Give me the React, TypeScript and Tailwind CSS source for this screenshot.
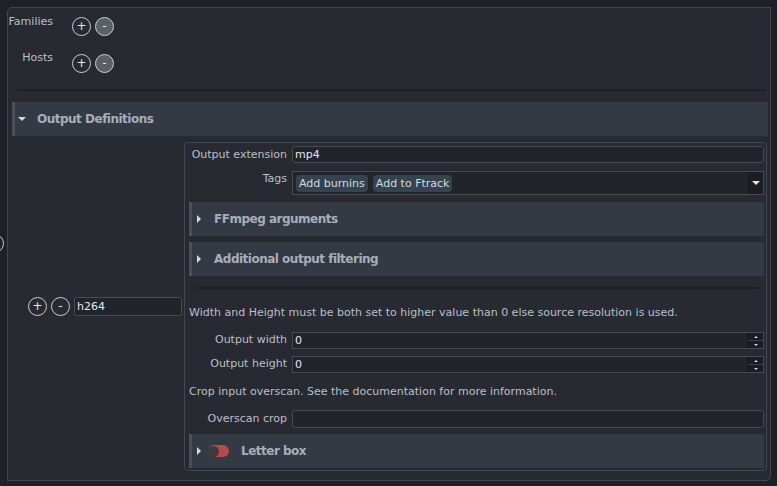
import React from 'react';

const CircleBtn = ({ sign, filled }: { sign: string; filled?: boolean }) => (
  <div
    className={`w-[19px] h-[19px] rounded-full border border-[#c9cdd2] flex items-center justify-center text-[12px] leading-none text-[#e4e7ea] ${
      filled ? 'bg-[#5b5f66]' : 'bg-[#272a31]'
    }`}
  >
    <span className="-mt-[1px]">{sign}</span>
  </div>
);

const Bar = ({ title, children }: { title: string; children?: React.ReactNode }) => (
  <div className="h-[34px] bg-[#343a43] border-l-[3px] border-[#4b4f56] flex items-center">
    <div className="w-0 h-0 ml-[5px] border-y-[4px] border-y-transparent border-l-[4px] border-l-[#d6dadf]" />
    {children}
    <span className={`font-bold text-[#a7afb8] text-[12px] tracking-[-0.5px] ${children ? 'ml-[12px]' : 'ml-[13px]'}`}>
      {title}
    </span>
  </div>
);

const Label = ({ text, className = '' }: { text: string; className?: string }) => (
  <div className={`w-[98px] shrink-0 whitespace-nowrap text-right text-[#b9c0c7] ${className}`}>{text}</div>
);

const Spinner = () => (
  <div className="w-[16px] h-full flex flex-col border-l border-[#15171b]">
    <div className="flex-1 bg-[#1b1d22] flex items-center justify-center border-b border-[#3a3e45]">
      <div className="w-0 h-0 border-x-[2px] border-x-transparent border-b-[2px] border-b-[#d6dadf]" />
    </div>
    <div className="flex-1 bg-[#1b1d22] flex items-center justify-center">
      <div className="w-0 h-0 border-x-[2px] border-x-transparent border-t-[2px] border-t-[#d6dadf]" />
    </div>
  </div>
);

const App = () => {
  return (
    <div className="relative w-[777px] h-[486px] overflow-hidden bg-[#1e2126] pt-[7px] pl-[7px] font-['DejaVu_Sans',sans-serif] text-[11px]">
      {/* cut-off button at left edge */}
      <div className="absolute left-[-15px] top-[234px] w-[19px] h-[19px] rounded-full border border-[#c9cdd2]" />
      <div className="w-[764px] h-[474px] bg-[#272a31] border border-[#42464e] rounded-tl-[5px] rounded-br-[5px]">
        {/* Families / Hosts */}
        <div className="flex flex-col gap-[13px] pt-[5px]">
          <div className="flex">
            <div className="w-[45px] text-right leading-[18px] text-[#b9c0c7]">Families</div>
            <div className="flex gap-[4px] ml-[19px] mt-[4px]">
              <CircleBtn sign="+" />
              <CircleBtn sign="-" filled />
            </div>
          </div>
          <div className="flex">
            <div className="w-[45px] text-right leading-[18px] text-[#b9c0c7]">Hosts</div>
            <div className="flex gap-[4px] ml-[19px] mt-[5px]">
              <CircleBtn sign="+" />
              <CircleBtn sign="-" filled />
            </div>
          </div>
        </div>
        <div className="h-[2px] bg-[#1e2127] ml-[9px] mr-[5px] mt-[16px]" />

        {/* Output Definitions header */}
        <div className="ml-[4px] mr-[2px] mt-[11px] h-[34px] bg-[#343a43] border-l-[3px] border-[#4b4f56] flex items-center">
          <div className="w-0 h-0 ml-[3px] border-x-[4px] border-x-transparent border-t-[4px] border-t-[#d6dadf]" />
          <span className="font-bold text-[#a7afb8] text-[12px] tracking-[-0.5px] ml-[11px]">Output Definitions</span>
        </div>

        <div className="flex mt-[6px]">
          {/* item row controls */}
          <div className="w-[176px] flex items-center pl-[20px] gap-[4px]">
            <CircleBtn sign="+" />
            <CircleBtn sign="-" />
            <div className="w-[108px] h-[19px] bg-[#21242a] border border-[#464a52] rounded-[2px] text-[#e4e7ea] leading-[17px] pl-[2px]">
              h264
            </div>
          </div>

          {/* definition box */}
          <div className="w-[583px] h-[329px] border border-[#42464e] rounded-[4px] pt-[3px] pl-[4px] pr-[2px] flex flex-col">
            <div className="flex items-start h-[17px]">
              <Label text="Output extension" className="pt-[1px]" />
              <div className="flex-1 ml-[5px] h-[17px] bg-[#21242a] border border-[#464a52] rounded-[3px] text-[#e4e7ea] leading-[15px] pl-[2px]">
                mp4
              </div>
            </div>
            <div className="flex mt-[8px] h-[24px]">
              <Label text="Tags" />
              <div className="flex-1 ml-[5px] h-[24px] bg-[#21242a] border border-[#464a52] flex items-center pl-[3px] gap-[5px]">
                <span className="bg-[#33444f] rounded-[4px] px-[3px] h-[17px] leading-[17px] text-[#d3d9de]">Add burnins</span>
                <span className="bg-[#33444f] rounded-[4px] px-[3px] h-[17px] leading-[17px] text-[#d3d9de]">Add to Ftrack</span>
                <div className="ml-auto w-[15px] h-full bg-[#1b1d22] border-l border-[#15171b] flex items-center justify-center">
                  <div className="w-0 h-0 border-x-[4px] border-x-transparent border-t-[4px] border-t-[#e1e4e7]" />
                </div>
              </div>
            </div>
            <div className="mt-[7px]">
              <Bar title="FFmpeg arguments" />
            </div>
            <div className="mt-[6px]">
              <Bar title="Additional output filtering" />
            </div>
            <div className="h-[2px] bg-[#1e2127] ml-[5px] mr-[5px] mt-[11px]" />
            <div className="mt-[16px] leading-[16px] text-[#b9c0c7]">
              Width and Height must be both set to higher value than 0 else source resolution is used.
            </div>
            <div className="flex items-center h-[17px] mt-[11px]">
              <Label text="Output width" />
              <div className="flex-1 ml-[5px] h-[17px] bg-[#21242a] border border-[#464a52] flex text-[#e4e7ea] leading-[15px]">
                <span className="pl-[2px] flex-1">0</span>
                <Spinner />
              </div>
            </div>
            <div className="flex items-center h-[17px] mt-[7px]">
              <Label text="Output height" />
              <div className="flex-1 ml-[5px] h-[17px] bg-[#21242a] border border-[#464a52] flex text-[#e4e7ea] leading-[15px]">
                <span className="pl-[2px] flex-1">0</span>
                <Spinner />
              </div>
            </div>
            <div className="mt-[11px] leading-[16px] text-[#b9c0c7]">
              Crop input overscan. See the documentation for more information.
            </div>
            <div className="flex items-center h-[18px] mt-[10px]">
              <Label text="Overscan crop" />
              <div className="flex-1 ml-[5px] h-[18px] bg-[#21242a] border border-[#464a52] rounded-[3px]" />
            </div>
            <div className="mt-[6px]">
              <Bar title="Letter box">
                <div className="ml-[7px] w-[21px] h-[12px] rounded-full bg-[#b8484a] flex items-center">
                  <div className="w-[11px] h-[11px] rounded-full bg-[#3b3c3f]" />
                </div>
              </Bar>
            </div>
          </div>
        </div>
      </div>
    </div>
  );
};

export default App;
